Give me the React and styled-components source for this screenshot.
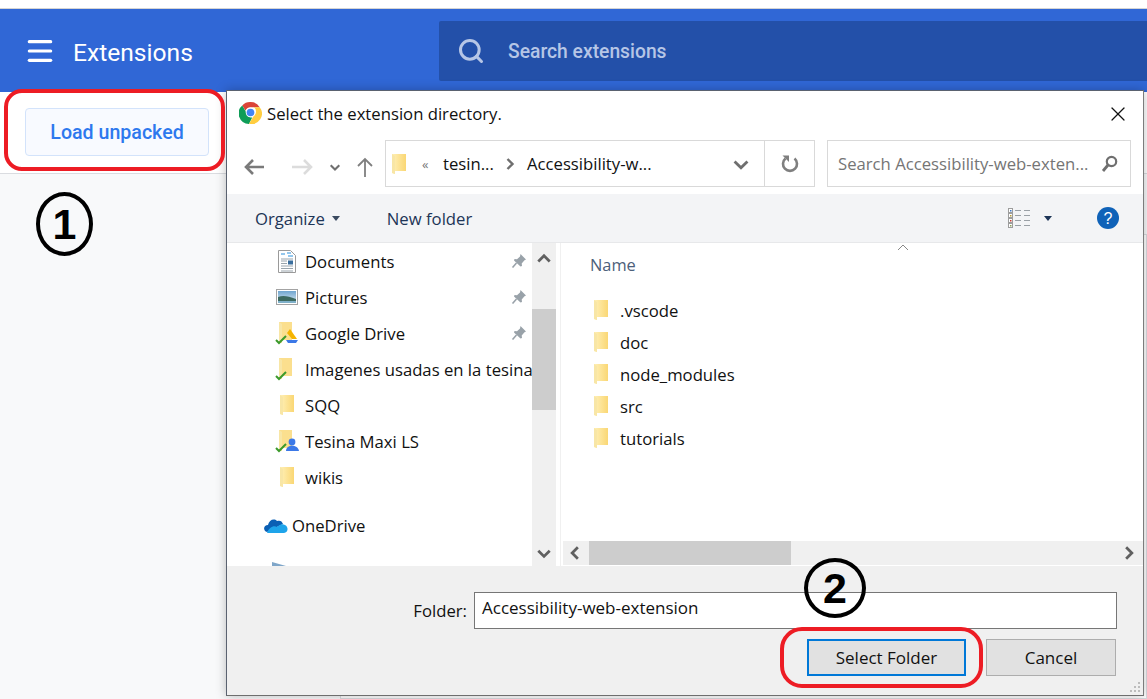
import styled, { createGlobalStyle } from "styled-components";
import { Search, Menu, X } from "lucide-react";

const GlobalStyle = createGlobalStyle`
  html, body {
    margin: 0;
    padding: 0;
    height: 100%;
    overflow: hidden;
    background: #ffffff;
  }
  #root { height: 699px; }
  * { box-sizing: border-box; }
`;

const Page = styled.div`
  position: relative;
  width: 1147px;
  height: 699px;
  overflow: hidden;
  display: flex;
  flex-direction: column;
  font-family: "Roboto", "Liberation Sans", sans-serif;
  background: #f8f9fa;
`;

const TopStrip = styled.div`
  height: 9px;
  background: #fff;
  border-bottom: 1px solid #d4d4d4;
`;

const Header = styled.header`
  height: 83px;
  background: #3067d6;
  display: flex;
  align-items: center;
  padding-left: 24px;
  color: #fff;
`;

const Title = styled.h1`
  margin: 3px 0 0 17px;
  width: 366px;
  font-size: 24.6px;
  font-weight: 400;
`;

const SearchBox = styled.div`
  flex: 1;
  height: 60px;
  margin-top: 1px;
  background: #2350a9;
  border-radius: 2px 0 0 2px;
  display: flex;
  align-items: center;
  padding-left: 18px;
  gap: 23px;
  color: #b6c6e6;
  font-size: 19.3px;
  font-weight: 500;
`;

const Toolbar = styled.div`
  height: 82px;
  background: #fff;
  border-bottom: 1px solid #dadce0;
  padding: 16px 0 0 25px;
`;

const LoadButton = styled.button`
  width: 184px;
  height: 48px;
  padding: 0;
  border: 1px solid #d3e3fb;
  border-radius: 4px;
  background: #f8faff;
  color: #2d78ee;
  font: 500 19.6px "Roboto", sans-serif;
`;

const CardsArea = styled.div`
  flex: 1;
  padding: 60px 0 0 340px;
`;

const ExtensionCard = styled.div`
  height: 100%;
  background: #fff;
  border: 1px solid #dadce0;
`;

const Dialog = styled.div`
  position: absolute;
  left: 226px;
  top: 90px;
  width: 918px;
  height: 606px;
  background: #fff;
  border: 1px solid #5a6270;
  border-right-color: #7c7c7c;
  border-bottom-color: #6e6e6e;
  box-shadow: 0 0 10px rgba(0, 0, 0, 0.25);
  display: flex;
  flex-direction: column;
  font-family: "Open Sans", "Noto Sans", sans-serif;
  font-size: 16.7px;
  color: #111;
`;

const TitleBar = styled.div`
  height: 45px;
  flex: none;
  display: flex;
  align-items: center;
  padding: 0 13px 0 12px;
  gap: 5px;
`;

const LogoSlot = styled.span`
  display: flex;
  margin-bottom: 3px;
`;

const TitleText = styled.span`
  flex: 1;
`;

const NavRow = styled.div`
  height: 58px;
  flex: none;
  padding: 4px 12px 0 16px;
  display: flex;
  align-items: flex-start;
`;

const NavButtons = styled.div`
  width: 142px;
  height: 50px;
  display: flex;
  align-items: center;
  padding-top: 3px;
`;

const NavSlot = styled.span`
  display: flex;
  margin-left: ${(p) => p.$gap || 0}px;
`;

const AddressBox = styled.div`
  width: 380px;
  height: 47px;
  border: 1px solid #d9d9d9;
  display: flex;
  align-items: center;
  padding-left: 5px;
`;

const Crumb = styled.span`
  display: flex;
  flex: none;
  align-items: center;
  margin-left: ${(p) => p.$gap || 0}px;
  width: ${(p) => (p.$width ? `${p.$width}px` : "auto")};
  font-size: ${(p) => p.$size || 16.7}px;
  color: ${(p) => p.$color || "#111"};
`;

const RefreshBox = styled.div`
  width: 50px;
  height: 47px;
  border: 1px solid #d9d9d9;
  border-left: 0;
  display: flex;
  align-items: center;
  justify-content: center;
`;

const FileSearch = styled.div`
  margin-left: 12px;
  width: 304px;
  height: 47px;
  border: 1px solid #d9d9d9;
  display: flex;
  align-items: center;
  justify-content: space-between;
  padding: 0 12px 0 10px;
  color: #757575;
`;

const CommandBar = styled.div`
  height: 49px;
  flex: none;
  background: #f3f4f6;
  border-bottom: 1px solid #e7e8ea;
  display: flex;
  align-items: center;
  padding: 0 24px 0 28px;
  color: #1d3557;
`;

const Command = styled.span`
  display: flex;
  align-items: center;
  gap: ${(p) => p.$inner || 7}px;
  margin-right: ${(p) => p.$gap || 0}px;
`;

const Spacer = styled.div`
  flex: 1;
`;

const Panes = styled.div`
  height: 323px;
  flex: none;
  display: flex;
`;

const NavPane = styled.div`
  width: 334px;
  flex: none;
  display: flex;
`;

const NavList = styled.ul`
  width: 305px;
  flex: none;
  margin: 0;
  padding: 0;
  list-style: none;
  overflow: hidden;
`;

const NavItem = styled.li`
  height: 36px;
  display: flex;
  align-items: center;
  padding-left: ${(p) => p.$indent}px;
  margin-top: ${(p) => p.$top || 0}px;
  white-space: nowrap;
  overflow: hidden;
`;

const IconSlot = styled.span`
  width: 24px;
  flex: none;
  display: flex;
  justify-content: center;
  margin-right: 6px;
`;

const NavLabel = styled.span`
  flex: 1;
  overflow: hidden;
  margin-left: ${(p) => p.$gap || 0}px;
`;

const PinSlot = styled.span`
  width: 21px;
  flex: none;
  display: flex;
`;

const StubSlot = styled.span`
  display: flex;
  margin-top: 8px;
`;

const VScroll = styled.div`
  width: 24px;
  flex: none;
  background: #f0f0f0;
  display: flex;
  flex-direction: column;
  justify-content: space-between;
  align-items: center;
  padding: 7px 0 5px;
  position: relative;
`;

const VThumb = styled.div`
  position: absolute;
  left: 0;
  top: 66px;
  width: 24px;
  height: 101px;
  background: #cdcdcd;
`;

const Divider = styled.div`
  width: 5px;
  background: #fff;
  border-right: 1px solid #f0f0f0;
`;

const FilePane = styled.div`
  flex: 1;
  display: flex;
  flex-direction: column;
  position: relative;
`;

const SortCaret = styled.svg`
  position: absolute;
  left: 336px;
  top: 1px;
`;

const ColumnHeader = styled.div`
  height: 45px;
  flex: none;
  padding: 10px 0 0 29px;
  font-size: 16.4px;
  color: #4c607a;
`;

const FileList = styled.ul`
  flex: 1;
  margin: 0;
  padding: 6px 0 0 32px;
  list-style: none;
`;

const FileItem = styled.li`
  height: 32px;
  display: flex;
  align-items: center;
  gap: 11px;
`;

const HScroll = styled.div`
  height: 24px;
  flex: none;
  margin: 0 0 1px 2px;
  background: #f0f0f0;
  display: flex;
  align-items: center;
  justify-content: space-between;
  padding: 0 6px 0 4px;
  position: relative;
`;

const HThumb = styled.div`
  position: absolute;
  left: 26px;
  top: 0;
  width: 202px;
  height: 24px;
  background: #cdcdcd;
`;

const Footer = styled.div`
  flex: 1;
  background: #f0f0f0;
  position: relative;
  padding: 26px 26px 0 0;
`;

const FolderRow = styled.div`
  display: flex;
  align-items: center;
  justify-content: flex-end;
  gap: 7px;
`;

const FolderInput = styled.div`
  width: 643px;
  height: 37px;
  background: #fff;
  border: 1px solid #767676;
  padding: 0 7px 7px;
  display: flex;
  align-items: center;
  font-size: 17px;
`;

const ButtonRow = styled.div`
  display: flex;
  justify-content: flex-end;
  gap: 20px;
  margin-top: 10px;
  padding-right: 1px;
`;

const DialogButton = styled.div`
  width: ${(p) => p.$width}px;
  height: 37px;
  background: #e1e1e1;
  border: ${(p) => (p.$primary ? "2px solid #0078d7" : "1px solid #adadad")};
  display: flex;
  align-items: center;
  justify-content: center;
  font-size: 17px;
`;

const Grip = styled.svg`
  position: absolute;
  right: 2px;
  bottom: 2px;
`;

const RedOutline = styled.div`
  position: absolute;
  left: ${(p) => p.$left}px;
  top: ${(p) => p.$top}px;
  width: ${(p) => p.$width}px;
  height: ${(p) => p.$height}px;
  border: 4px solid #ed1c24;
  border-radius: ${(p) => p.$radius};
`;

const StepBadge = styled.div`
  position: absolute;
  left: ${(p) => p.$left}px;
  top: ${(p) => p.$top}px;
  width: ${(p) => p.$width}px;
  height: ${(p) => p.$height}px;
  border: 4px solid #000;
  border-radius: 50%;
  display: flex;
  align-items: center;
  justify-content: center;
  font: 700 43px "Liberation Sans", Arial, sans-serif;
  color: #000;
`;

const ChromeLogo = () => (
  <svg width="23" height="23" viewBox="0 0 24 24">
    <path d="M12 1a11 11 0 0 1 9.6 5.5H12a5.5 5.5 0 0 0-5.2 3.7L3.4 4.6A11 11 0 0 1 12 1z" fill="#db4437" />
    <path d="M3.4 4.6l4.8 8.4a5.5 5.5 0 0 0 5.6 4.3l-3.4 6.6A11 11 0 0 1 3.4 4.6z" fill="#0f9d58" />
    <path d="M21.6 6.5A11 11 0 0 1 10.4 23.9l4.8-8.3A5.5 5.5 0 0 0 15.6 6.5z" fill="#ffcd40" />
    <circle cx="12" cy="12" r="5" fill="#fff" />
    <circle cx="12" cy="12" r="4" fill="#4285f4" />
  </svg>
);

const FolderIcon = () => (
  <svg width="16" height="22" viewBox="0 0 16 22">
    <defs>
      <linearGradient id="folderFill" x1="0" y1="0" x2="1" y2="0">
        <stop offset="0" stopColor="#fff0b8" />
        <stop offset="1" stopColor="#fad774" />
      </linearGradient>
    </defs>
    <path d="M1 1h14v17H4v3l-3-1z" fill="url(#folderFill)" />
    <path d="M1 1l3 2v18l-3-1z" fill="#f8e6a6" />
  </svg>
);

const SyncFolder = ({ badge }) => (
  <svg width="24" height="24" viewBox="0 0 24 24">
    <path d="M4 1h13v18H7v3l-3-1z" fill="#fbdf8e" />
    <path d="M4 1l3 2v19l-3-1z" fill="#f8e6a6" />
    {badge === "drive" && (
      <>
        <path d="M15 8l7 10h-5l-5-6z" fill="#f5b400" />
        <path d="M11 19h12l-2 3H13z" fill="#3b78e7" />
      </>
    )}
    {badge === "user" && (
      <>
        <circle cx="17" cy="13" r="3.4" fill="#3b78e7" />
        <path d="M11 22c0-7 12-7 13 0z" fill="#3b78e7" />
      </>
    )}
    <path d="M1 19l3 3 7-7" fill="none" stroke="#3c9a2c" strokeWidth="2" />
  </svg>
);

const DocIcon = () => (
  <svg width="18" height="23" viewBox="0 0 18 23">
    <path d="M.5.5h12l5 5v17H.5z" fill="#fff" stroke="#9a9a9a" />
    <path d="M3 4h4M9 3h4M10 6h5" stroke="#2a8fdc" strokeWidth="1.2" />
    <path d="M3 9h12M3 16h12M3 18.5h12M3 21h12" stroke="#9aa5ad" />
    <path d="M3 11h6M3 13.5h6" stroke="#9aa5ad" />
    <rect x="10" y="10.5" width="5" height="4" fill="#3b6f9e" />
  </svg>
);

const PictureIcon = () => (
  <svg width="22" height="16" viewBox="0 0 22 16">
    <defs>
      <linearGradient id="sky" x1="0" y1="0" x2="0" y2="1">
        <stop offset="0" stopColor="#6fa5cf" />
        <stop offset="1" stopColor="#e2eef4" />
      </linearGradient>
    </defs>
    <rect x=".5" y=".5" width="21" height="15" fill="#fff" stroke="#a3a3a3" />
    <rect x="2" y="2" width="18" height="12" fill="url(#sky)" />
    <path d="M2 8c5-2 10-1 18 2v4H2z" fill="#3d6a60" />
    <path d="M2 12h18v2H2z" fill="#7fb0c9" />
  </svg>
);

const CloudIcon = () => (
  <svg width="25" height="17" viewBox="0 0 25 17">
    <path d="M4 15c-4-1-4-7 1-7 1-5 6-7 9-4 3-1 5 0 6 3z" fill="#0a5fb4" />
    <path d="M4 16h17c4 0 5-6 1-8-3-2-6 0-8 2-3-2-8 0-10 6z" fill="#1ea4ea" />
  </svg>
);

const NetworkStub = () => (
  <svg width="16" height="6" viewBox="0 0 16 6">
    <path d="M1 0l14 4v2H1z" fill="#7fa6c9" />
  </svg>
);

const Pin = () => (
  <svg width="16" height="16" viewBox="0 0 16 16">
    <path d="M9.5 1L15 6.5l-1.5.8-2.8 3.2.3 2.5-1.5.5L3 7.5l.5-1.5 2.5.3 3-2.8z" fill="#99a2a9" />
    <path d="M5.5 10l-4 4.5" stroke="#99a2a9" strokeWidth="1.6" />
  </svg>
);

const Chevron = ({ dir, size = 16, color = "#606060", width = 2.4 }) => {
  const paths = {
    up: "M2 10l5-5 5 5",
    down: "M2 5l5 5 5-5",
    left: "M9.5 2l-5 5 5 5",
    right: "M4.5 2l5 5-5 5",
  };
  return (
    <svg width={size} height={size} viewBox="0 0 14 14">
      <path d={paths[dir]} fill="none" stroke={color} strokeWidth={width} />
    </svg>
  );
};

const Arrow = ({ dir, color }) => {
  const paths = {
    left: "M21 11H3M10 4l-7 7 7 7",
    right: "M1 11h19M13 4l7 7-7 7",
    up: "M11 21V3M4 10l7-7 7 7",
  };
  return (
    <svg width="22" height="22" viewBox="0 0 22 22">
      <path d={paths[dir]} fill="none" stroke={color} strokeWidth={dir === "up" ? 1.8 : 2.6} />
    </svg>
  );
};

const Refresh = () => (
  <svg width="18" height="20" viewBox="0 0 18 20">
    <path d="M4.5 4.5a7 7 0 1 0 9 0" fill="none" stroke="#7f7f7f" strokeWidth="2.6" />
    <path d="M1.5 1.5H8V8z" fill="#7f7f7f" />
  </svg>
);

const Magnifier = () => (
  <svg width="17" height="18" viewBox="0 0 17 18">
    <circle cx="10.5" cy="6.5" r="4.7" fill="none" stroke="#6f6f6f" strokeWidth="2.2" />
    <path d="M7 10l-5 6" stroke="#6f6f6f" strokeWidth="2.8" />
  </svg>
);

const Caret = ({ color = "#3a4a60" }) => (
  <svg width="8" height="5" viewBox="0 0 8 5">
    <path d="M0 0h8L4 5z" fill={color} />
  </svg>
);

const ViewIcon = () => (
  <svg width="22" height="21" viewBox="0 0 22 21">
    {[0, 5, 10, 15].map((y, i) => (
      <g key={y}>
        <rect x=".5" y={y + 0.5} width="4" height="4" fill="#fff" stroke="#9d9d9d" />
        <rect x="2" y={y + 2} width="1.5" height="1.5" fill={["#3b78c8", "#b59a35", "#c8372d", "#8aa05a"][i]} />
        <path d={`M7 ${y + 2.5}h6M16 ${y + 2.5}h6`} stroke="#9aa0a6" />
      </g>
    ))}
  </svg>
);

const HelpIcon = () => (
  <svg width="22" height="22" viewBox="0 0 22 22">
    <circle cx="11" cy="11" r="11" fill="#0f62b8" />
    <text x="11" y="17" textAnchor="middle" fontSize="16" fontFamily="Liberation Sans, sans-serif" fill="#fff">?</text>
  </svg>
);

const navItems = [
  { label: "Documents", icon: <DocIcon />, pin: true },
  { label: "Pictures", icon: <PictureIcon />, pin: true },
  { label: "Google Drive", icon: <SyncFolder badge="drive" />, pin: true },
  { label: "Imagenes usadas en la tesina", icon: <SyncFolder /> },
  { label: "SQQ", icon: <FolderIcon /> },
  { label: "Tesina Maxi LS", icon: <SyncFolder badge="user" /> },
  { label: "wikis", icon: <FolderIcon /> },
];

const folders = [".vscode", "doc", "node_modules", "src", "tutorials"];

const App = () => (
  <Page>
    <GlobalStyle />
    <TopStrip />
    <Header>
      <Menu size={32} strokeWidth={2.4} />
      <Title>Extensions</Title>
      <SearchBox>
        <Search size={28} strokeWidth={2.6} />
        <span>Search extensions</span>
      </SearchBox>
    </Header>
    <Toolbar>
      <LoadButton>Load unpacked</LoadButton>
    </Toolbar>
    <CardsArea>
      <ExtensionCard />
    </CardsArea>

    <Dialog>
      <TitleBar>
        <LogoSlot>
          <ChromeLogo />
        </LogoSlot>
        <TitleText>Select the extension directory.</TitleText>
        <X size={24} strokeWidth={1.2} color="#111" />
      </TitleBar>
      <NavRow>
        <NavButtons>
          <NavSlot>
            <Arrow dir="left" color="#7a7a7a" />
          </NavSlot>
          <NavSlot $gap={26}>
            <Arrow dir="right" color="#dcdcdc" />
          </NavSlot>
          <NavSlot $gap={16}>
            <Chevron dir="down" size={12} color="#6f6f6f" />
          </NavSlot>
          <NavSlot $gap={13}>
            <Arrow dir="up" color="#7f7f7f" />
          </NavSlot>
        </NavButtons>
        <AddressBox>
          <FolderIcon />
          <Crumb $gap={15} $width={9} $size={13} $color="#777">«</Crumb>
          <Crumb $gap={12} $width={56}>tesin...</Crumb>
          <Crumb $gap={4} $width={14}>
            <Chevron dir="right" size={14} color="#6f6f6f" />
          </Crumb>
          <Crumb $gap={10} $width={205}>Accessibility-w...</Crumb>
          <Chevron dir="down" size={18} color="#6f6f6f" width={2.2} />
        </AddressBox>
        <RefreshBox>
          <Refresh />
        </RefreshBox>
        <FileSearch>
          <span>Search Accessibility-web-exten...</span>
          <Magnifier />
        </FileSearch>
      </NavRow>
      <CommandBar>
        <Command $gap={47}>
          Organize <Caret />
        </Command>
        <Command>New folder</Command>
        <Spacer />
        <Command $gap={45} $inner={14}>
          <ViewIcon />
          <Caret color="#1d3557" />
        </Command>
        <HelpIcon />
      </CommandBar>
      <Panes>
        <NavPane>
          <NavList>
            {navItems.map((item) => (
              <NavItem key={item.label} $indent={48}>
                <IconSlot>{item.icon}</IconSlot>
                <NavLabel>{item.label}</NavLabel>
                {item.pin && (
                  <PinSlot>
                    <Pin />
                  </PinSlot>
                )}
              </NavItem>
            ))}
            <NavItem $indent={36} $top={12}>
              <CloudIcon />
              <NavLabel $gap={4}>OneDrive</NavLabel>
            </NavItem>
            <NavItem $indent={44}>
              <StubSlot>
                <NetworkStub />
              </StubSlot>
            </NavItem>
          </NavList>
          <VScroll>
            <VThumb />
            <Chevron dir="up" />
            <Chevron dir="down" />
          </VScroll>
          <Divider />
        </NavPane>
        <FilePane>
          <SortCaret width="12" height="6" viewBox="0 0 12 6">
            <path d="M1 6l5-5 5 5" fill="none" stroke="#888" />
          </SortCaret>
          <ColumnHeader>Name</ColumnHeader>
          <FileList>
            {folders.map((name) => (
              <FileItem key={name}>
                <FolderIcon />
                {name}
              </FileItem>
            ))}
          </FileList>
          <HScroll>
            <HThumb />
            <Chevron dir="left" />
            <Chevron dir="right" />
          </HScroll>
        </FilePane>
      </Panes>
      <Footer>
        <FolderRow>
          <span>Folder:</span>
          <FolderInput>Accessibility-web-extension</FolderInput>
        </FolderRow>
        <ButtonRow>
          <DialogButton $primary $width={159}>Select Folder</DialogButton>
          <DialogButton $width={130}>Cancel</DialogButton>
        </ButtonRow>
        <Grip width="12" height="12" viewBox="0 0 12 12">
          <path d="M9 1h2v2H9zM5 5h2v2H5zM9 5h2v2H9zM1 9h2v2H1zM5 9h2v2H5zM9 9h2v2H9z" fill="#bdbdbd" />
        </Grip>
      </Footer>
    </Dialog>

    <RedOutline $left={4} $top={89} $width={221} $height={82} $radius="18px" />
    <RedOutline $left={780} $top={627} $width={203} $height={61} $radius="22px" />
    <StepBadge $left={36} $top={192} $width={57} $height={64}>1</StepBadge>
    <StepBadge $left={804} $top={558} $width={62} $height={60}>2</StepBadge>
  </Page>
);

export default App;
